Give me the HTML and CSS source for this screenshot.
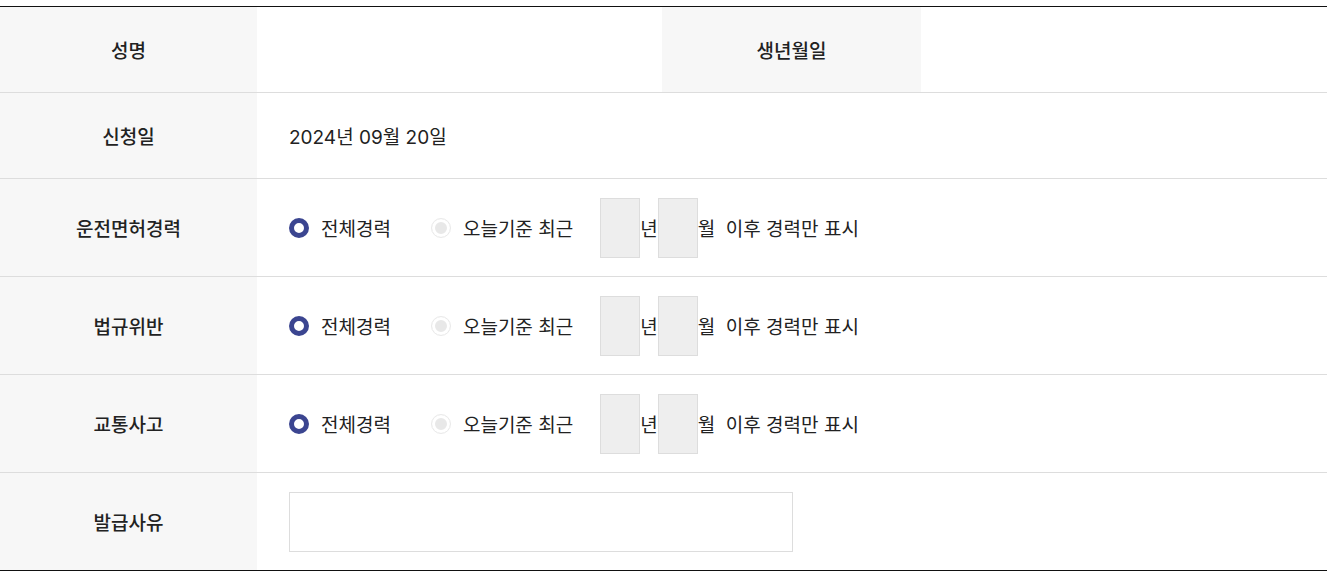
FILE: index.html
```html
<!DOCTYPE html>
<html lang="ko">
<head>
  <meta charset="UTF-8" />
  <meta name="viewport" content="width=device-width, initial-scale=1" />
  <title>운전경력증명서 신청</title>
  <link rel="stylesheet" href="styles.css">
</head>
<body>

  <table class="apply-table">
    <colgroup>
      <col class="col-label" />
      <col class="col-value" />
      <col class="col-label2" />
      <col />
    </colgroup>
    <tr class="row-first">
      <th>성명</th>
      <td></td>
      <th>생년월일</th>
      <td></td>
    </tr>
    <tr class="row-short">
      <th>신청일</th>
      <td colspan="3">2024년 09월 20일</td>
    </tr>
    <tr>
      <th>운전면허경력</th>
      <td colspan="3">
        <div class="period">
          <label class="opt"><input type="radio" name="license" checked /> 전체경력</label>
          <label class="opt"><input type="radio" name="license" disabled /> 오늘기준 최근</label>
          <input type="text" class="num" disabled /><span>년</span>
          <input type="text" class="num" disabled /><span>월&nbsp; 이후 경력만 표시</span>
        </div>
      </td>
    </tr>
    <tr>
      <th>법규위반</th>
      <td colspan="3">
        <div class="period">
          <label class="opt"><input type="radio" name="violation" checked /> 전체경력</label>
          <label class="opt"><input type="radio" name="violation" disabled /> 오늘기준 최근</label>
          <input type="text" class="num" disabled /><span>년</span>
          <input type="text" class="num" disabled /><span>월&nbsp; 이후 경력만 표시</span>
        </div>
      </td>
    </tr>
    <tr>
      <th>교통사고</th>
      <td colspan="3">
        <div class="period">
          <label class="opt"><input type="radio" name="accident" checked /> 전체경력</label>
          <label class="opt"><input type="radio" name="accident" disabled /> 오늘기준 최근</label>
          <input type="text" class="num" disabled /><span>년</span>
          <input type="text" class="num" disabled /><span>월&nbsp; 이후 경력만 표시</span>
        </div>
      </td>
    </tr>
    <tr>
      <th>발급사유</th>
      <td colspan="3"><input type="text" class="reason" /></td>
    </tr>
  </table>

</body>
</html>
```

FILE: styles.css
```css
body {
  font-family: Inter, "Noto Sans CJK KR", sans-serif;
  margin: 0;
  padding-top: 6px;
  background: #fff;
  color: #222;
}

.apply-table {
  width: 100%;
  border-collapse: separate;
  border-spacing: 0;
  table-layout: fixed;
  border-top: 1px solid #111;
  border-bottom: 1px solid #111;
  font-size: 19px;
}

.col-label {
  width: 257px;
}

.col-value {
  width: 405px;
}

.col-label2 {
  width: 259px;
}

.apply-table tr {
  height: 98px;
}

.apply-table tr.row-short {
  height: 86px;
}

.apply-table tr.row-first {
  height: 85px;
}

.apply-table th,
.apply-table td {
  border-top: 1px solid #ddd;
  padding: 0 32px;
  vertical-align: middle;
}

.apply-table tr.row-first th,
.apply-table tr.row-first td {
  border-top: none;
}

.apply-table th {
  background: #f7f7f7;
  font-weight: 500;
  text-align: center;
}

.apply-table td {
  text-align: left;
}

.period {
  display: flex;
  align-items: center;
}

.opt {
  display: flex;
  align-items: center;
  gap: 12px;
  margin-right: 27px;
}

.opt + .opt {
  margin-left: 13px;
}

.opt input {
  appearance: none;
  margin: 0;
  width: 20px;
  height: 20px;
  border-radius: 50%;
  box-sizing: border-box;
  border: 5px solid #3b4590;
  background: #fff;
}

.opt input:disabled {
  border: 1px solid #eaeaea;
  background: #fff;
  box-shadow: inset 0 0 0 3px #fff, inset 0 0 0 9px #e8e8e8;
}

.num {
  width: 40px;
  height: 60px;
  box-sizing: border-box;
  margin: 0;
  border: 1px solid #ddd;
  background: #eee;
}

.reason {
  display: block;
  width: 504px;
  height: 60px;
  box-sizing: border-box;
  margin: 0;
  border: 1px solid #ddd;
  background: #fff;
}
```
